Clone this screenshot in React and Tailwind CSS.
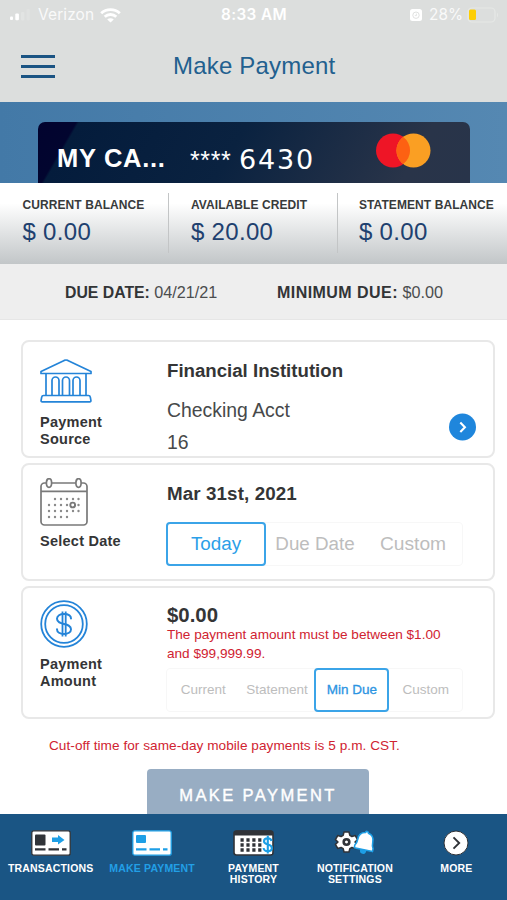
import React from "react";

function StatusBar() {
  return (
    <div className="flex h-[30px] items-center text-white">
      <div className="flex w-[221px] items-center pl-[10px]">
        <svg width="24" height="12" viewBox="0 0 24 12" fill="#fff">
          <rect x="0" y="7.5" width="3" height="3.6" rx="1" />
          <rect x="5.3" y="4.6" width="3.6" height="6.600" rx="1" />
          <rect x="11" y="3" width="3.4" height="8.6" rx="1" opacity=".18" />
          <rect x="16.5" y="0" width="3.4" height="11.6" rx="1" opacity=".12" />
        </svg>
        <span className="ml-[4px] w-[60px] font-['Inter',sans-serif] text-[15.5px] leading-[20px] tracking-[0.1px] whitespace-nowrap opacity-85">Verizon</span>
        <svg className="ml-[2px]" width="21" height="15" viewBox="0 0 21 15" fill="none" stroke="#fff" strokeWidth="2.9">
          <path d="M1.2 5.2C6.4.4 14.6.4 19.8 5.2" />
          <path d="M4.7 8.8c3.3-3 8.3-3 11.6 0" />
          <path d="M10.5 14.6 7.2 11.4c1.8-1.7 4.8-1.7 6.600 0z" fill="#fff" stroke="none" />
        </svg>
      </div>
      <span className="w-[189px] font-['Inter',sans-serif] text-[15.3px] font-semibold leading-[20px] tracking-[0.4px] whitespace-nowrap">8:33 AM</span>
      <svg width="12" height="12" viewBox="0 0 12 12">
        <rect width="12" height="12" rx="2.5" fill="#fff" />
        <circle cx="6" cy="6.2" r="3.2" fill="none" stroke="#dcdedd" strokeWidth=".9" />
        <path d="M6.4 4.600v2H4.800" fill="none" stroke="#dcdedd" strokeWidth=".8" />
      </svg>
      <span className="ml-[7px] w-[36px] font-['Inter',sans-serif] text-[15.3px] leading-[20px] tracking-[0.1px] whitespace-nowrap opacity-85">28%</span>
      <svg className="ml-[2px]" width="32" height="16" viewBox="0 0 32 16">
        <rect x="1" y="1" width="27" height="14" rx="4" fill="none" stroke="#e6e8e6" strokeWidth="1.2" />
        <rect x="2" y="2.500" width="7" height="10.500" rx="1.5" fill="#fdce04" />
        <path d="M30 5.5q2 2.5 0 5z" fill="#e6e8e6" />
      </svg>
    </div>
  );
}

function Header() {
  return (
    <header className="h-[102px] bg-[#dcdedd]">
      <StatusBar />
      <div className="flex h-[72px] items-center pl-[21px]">
        <div className="flex w-[34px] flex-col gap-[7px] pt-[1px]">
          <span className="h-[3px] bg-[#1b5483]" />
          <span className="h-[3px] bg-[#1b5483]" />
          <span className="h-[3px] bg-[#1b5483]" />
        </div>
        <h1 className="ml-[118px] text-[24px] leading-[30px] tracking-[0.2px] text-[#22608f]">Make Payment</h1>
      </div>
    </header>
  );
}

function CardBanner() {
  return (
    <div className="h-[81px] bg-linear-to-r from-[#4379a7] to-[#5588b2] px-[38px] pt-[20px]">
      <div className="flex h-[61px] w-[432px] items-start overflow-hidden rounded-t-[7px] bg-[linear-gradient(120deg,#02032f_0%,#02052f_8.2%,#041c3c_8.8%,#0a2240_45%,#293449_85%,#28344a_100%)] text-white">
        <span className="mt-[20px] ml-[19px] w-[133px] text-[25.5px] font-bold leading-[32px] tracking-[0.7px] whitespace-nowrap">MY CA...</span>
        <span className="mt-[22px] w-[49px] text-[25px] leading-[32px] tracking-[0.6px]">****</span>
        <span className="mt-[22px] w-[137px] font-['DejaVu_Sans',sans-serif] text-[27px] leading-[32px] tracking-[1.8px]">6430</span>
        <svg className="mt-[11px]" width="56" height="36" viewBox="0 0 56 36">
          <circle cx="17" cy="17.5" r="17" fill="#ee1526" />
          <circle cx="37.500" cy="17.5" r="17" fill="#fa9f23" />
          <path d="M27.250 3.900a17 17 0 0 1 0 27.200a17 17 0 0 1 0-27.200z" fill="#fd6112" />
        </svg>
      </div>
    </div>
  );
}

function Stat({ label, value }) {
  return (
    <div className="pt-[12px]">
      <div className="text-[12px] font-bold leading-[21px] tracking-[0.08px] whitespace-nowrap text-[#383a3b]">{label}</div>
      <div className="pt-px text-[24px] leading-[30px] tracking-[0.3px] whitespace-nowrap text-[#20406f]">{value}</div>
    </div>
  );
}

function Balances() {
  return (
    <div className="flex h-[81px] bg-linear-to-b from-white from-25% to-[#c2c6c8]">
      <div className="w-[168px] pl-[22.5px]"><Stat label="CURRENT BALANCE" value="$ 0.00" /></div>
      <div className="mt-[10px] h-[60px] w-px bg-[#c3c5c6]" />
      <div className="w-[168px] pl-[22px]"><Stat label="AVAILABLE CREDIT" value="$ 20.00" /></div>
      <div className="mt-[10px] h-[60px] w-px bg-[#c3c5c6]" />
      <div className="pl-[21px]"><Stat label="STATEMENT BALANCE" value="$ 0.00" /></div>
    </div>
  );
}

function DueBar() {
  return (
    <div className="flex h-[56px] items-center border-b border-[#e6e6e6] bg-[#eeeeee] pt-px pl-[65px] text-[16.2px] leading-[20px] whitespace-nowrap text-[#4b4d4e]">
      <div className="w-[212px]"><b className="text-[15.8px] text-[#323436]">DUE DATE:</b> 04/21/21</div>
      <div><b className="text-[16px] tracking-[0.45px] text-[#323436]">MINIMUM DUE:</b> $0.00</div>
    </div>
  );
}

function BankIcon() {
  return (
    <svg width="52" height="44" viewBox="0 0 52 44" fill="none" stroke="#2484d8" strokeWidth="1.7" strokeLinejoin="round">
      <path d="M1 12.5 24.2 1.4q1.8-.8 3.6 0L51 12.5v2H1z" />
      <path d="M6 14.5V36M46 14.5V36M3.5 36.5h45q1.5 0 1.8 1.6l.6 3.2q.2 1.5-1.2 1.5H2.3q-1.4 0-1.2-1.5l.6-3.2q.3-1.6 1.8-1.6z" />
      <path d="M12 36.5V21.500a3.500 3.500 0 0 1 7 0v15M22.500 36.500v-15a3.500 3.500 0 0 1 7 0v15M33 36.500v-15a3.500 3.500 0 0 1 7 0v15" />
    </svg>
  );
}

const calendarRows = [
  { y: 21, xs: [15, 21, 27, 33, 38.5] },
  { y: 27, xs: [9, 15, 21, 27, 38.5] },
  { y: 33, xs: [9, 15, 21, 27, 33, 38.5] },
  { y: 39, xs: [9, 15, 21, 27] },
];

function CalendarIcon() {
  return (
    <svg width="48" height="48" viewBox="0 0 48 48" fill="none" stroke="#797979" strokeWidth="1.7">
      <rect x="1" y="5" width="46" height="42" rx="3.5" />
      <path d="M1 13.300h46" />
      <ellipse cx="9" cy="5" rx="2.600" ry="4.300" fill="#fff" />
      <ellipse cx="38.500" cy="5" rx="2.600" ry="4.300" fill="#fff" />
      <circle cx="32.700" cy="27" r="2.400" strokeWidth="1.900" />
      {calendarRows.map((row) => row.xs.map((x) => (
        <circle key={`${x}-${row.y}`} cx={x} cy={row.y} r="1.200" fill="#8a8a8a" stroke="none" />
      )))}
    </svg>
  );
}

function DollarIcon() {
  return (
    <svg width="48" height="48" viewBox="0 0 48 48" fill="none" stroke="#2484d8" strokeWidth="1.800">
      <circle cx="24" cy="24" r="22.800" />
      <circle cx="24" cy="24" r="18.800" />
      <path d="M31 18.600c0-3-3-4.600-7-4.600s-7 1.800-7 4.800c0 7 14 3.400 14 10.400 0 3-3 4.800-7 4.800s-7-1.800-7-4.800" strokeWidth="2" strokeLinecap="round" />
      <path d="M22.500 11.500v25M25.700 11.500v25" />
    </svg>
  );
}

function Panel({ height, icon, label, children }) {
  return (
    <section className={`${height} flex overflow-hidden rounded-[8px] border-2 border-[#e8e8e8] bg-white pl-[16px]`}>
      <div className="w-[128px] shrink-0 pl-px">
        {icon}
        <div className="text-[14.5px] font-bold leading-[17.5px] tracking-[0.25px] whitespace-pre-line text-[#343536]">{label}</div>
      </div>
      {children}
    </section>
  );
}

function SourcePanel() {
  return (
    <Panel height="h-[118px]" label={"Payment\nSource"} icon={<div className="h-[71.500px] pt-[17px]"><BankIcon /></div>}>
      <div className="w-[282px] pt-[16px] text-[#47494a]">
        <div className="text-[18.65px] font-bold leading-[25px] text-[#343536]">Financial Institution</div>
        <div className="mt-[11px] text-[19.4px] leading-[32px]">Checking Acct<br />16</div>
      </div>
      <svg className="mt-[71px]" width="27" height="28" viewBox="0 0 27 28">
        <circle cx="13.500" cy="14" r="13.500" fill="#1f86dc" />
        <path d="m11.300 9.500 4.600 4.700-4.600 4.700" fill="none" stroke="#fff" strokeWidth="2.100" />
      </svg>
    </Panel>
  );
}

function DatePanel() {
  return (
    <Panel height="h-[118px]" label="Select Date" icon={<div className="h-[67.500px] pt-[13px]"><CalendarIcon /></div>}>
      <div className="pt-[16px]">
        <div className="text-[18.800px] font-bold leading-[25px] tracking-[0.1px] text-[#343536]">Mar 31st, 2021</div>
        <div className="mt-[16px] -ml-px flex h-[44px] w-[297px] items-center rounded-[4px] border border-[#f7f7f7] text-[18.8px] text-[#bdbdbd]">
          <div className="-ml-px flex h-[44px] w-[100px] shrink-0 items-center justify-center rounded-[4px] border-2 border-[#3ba4e8] pt-px text-[#2b9fe8]">Today</div>
          <div className="w-[98px] pt-px text-center whitespace-nowrap">Due Date</div>
          <div className="w-[98px] pt-px text-center text-[19.2px]">Custom</div>
        </div>
      </div>
    </Panel>
  );
}

function AmountPanel() {
  return (
    <Panel height="h-[133px]" label={"Payment\nAmount"} icon={<div className="h-[67.500px] pt-[12px]"><DollarIcon /></div>}>
      <div className="pt-[15px]">
        <div className="text-[20.4px] font-bold leading-[25px] text-[#343536]">$0.00</div>
        <p className="-mt-[3px] w-[285px] text-[13.6px] leading-[19px] text-[#d02331]">The payment amount must be between $1.00 and $99,999.99.</p>
        <div className="mt-[5px] -ml-px flex h-[44px] w-[297px] items-center rounded-[4px] border border-[#f7f7f7] text-[13.5px] text-[#bdbdbd]">
          <div className="w-[73px] text-center">Current</div>
          <div className="w-[75px] text-center">Statement</div>
          <div className="flex h-[44px] w-[75px] shrink-0 items-center justify-center rounded-[4px] border-2 border-[#3ba4e8] text-[#2b94e2] [-webkit-text-stroke:0.3px_#2b94e2]">Min Due</div>
          <div className="w-[73px] text-center">Custom</div>
        </div>
      </div>
    </Panel>
  );
}

function CardIcon({ active }) {
  const ink = active ? "#1e9fe6" : "#303338";
  return (
    <svg width="40" height="26" viewBox="0 0 40 26">
      <rect x=".8" y=".8" width="38.400" height="24.400" rx="2" fill="#fff" stroke={ink} strokeWidth="1.300" />
      <rect x="4" y={active ? 5 : 4.500} width={active ? 10 : 10.500} height={active ? 8 : 11} rx="1" fill={ink} />
      {!active && <path d="M21 7.500h6V5l6.500 5-6.500 4.500V12h-6z" fill="#1e9fe6" />}
      <path d="M4 19.300h10.500M17.500 19.300H28M31 19.300h4.500" stroke={ink} strokeWidth="2.200" />
    </svg>
  );
}

function HistoryIcon() {
  return (
    <svg width="42" height="26" viewBox="0 0 42 26">
      <rect x="1" y="1" width="39" height="24" rx="2.500" fill="#fff" stroke="#303338" strokeWidth="1.600" />
      <path d="M1 5.500V3q0-2.500 2.500-2.500h34Q40 .5 40 3v2.500z" fill="#303338" />
      {[10, 15, 20].map((y) => (
        <path key={y} d={`M7.500 ${y}h21.500`} stroke="#303338" strokeWidth="3.300" strokeDasharray="3.200 2.700" />
      ))}
      <path d="M30 6h9v18h-9z" fill="#fff" />
      <path d="M38.500 11c-.3-2-1.700-2.800-3.700-2.800-2.300 0-3.800 1.100-3.800 3 0 4.500 7.900 2.300 7.900 6.800 0 2-1.700 3.200-4.100 3.200s-4-1.200-4.200-3.200M34.800 5.800v17.700" fill="none" stroke="#1e9fe6" strokeWidth="2.100" />
    </svg>
  );
}

function SettingsIcon() {
  return (
    <svg width="42" height="28" viewBox="0 0 42 28">
      <g transform="translate(12.500 13)">
        <path d="M-2.500-10h5l.8 3.300 2.100 1.200 3.300-1 2.400 4.100L8.500 0l2.600 2.400-2.400 4.100-3.300-1-2.100 1.200L2.500 10h-5l-.8-3.300-2.100-1.200-3.300 1-2.400-4.100L-8.500 0l-2.600-2.400 2.400-4.100 3.300 1 2.100-1.200z" fill="#fff" stroke="#303338" strokeWidth="1.500" strokeLinejoin="round" />
        <circle r="2.800" fill="#fff" stroke="#303338" strokeWidth="2.600" />
      </g>
      <g transform="translate(31 13) rotate(12) scale(.98)" fill="#fff" stroke="#1e9fe6" strokeWidth="1.600" strokeLinejoin="round">
        <path d="M-2.500 8.500h5Q2.500 11.500 0 11.500T-2.500 8.500z" fill="#1e9fe6" />
        <path d="M-1.500-9.500q0-1.500 1.500-1.500t1.500 1.500C6-8.700 7.800-5.500 7.800-1.500c0 3.500.2 4.500 1.700 6.500v3h-19V5C-8 3-7.800 2-7.800-1.500c0-4 1.800-7.200 6.300-8z" />
      </g>
    </svg>
  );
}

function MoreIcon() {
  return (
    <svg width="26" height="26" viewBox="0 0 26 26">
      <circle cx="13" cy="13" r="12" fill="#fff" stroke="#303338" strokeWidth="1" />
      <path d="m10.500 7.300 5.700 5.700-5.700 5.700" fill="none" stroke="#303338" strokeWidth="1.900" />
    </svg>
  );
}

function NavItem({ icon, label, active }) {
  return (
    <div className={`flex flex-1 basis-0 flex-col items-center ${active ? "text-[#229fe6]" : "text-white"}`}>
      <div className="flex h-[29px] items-center">{icon}</div>
      <div className="mt-[5.500px] text-center text-[10.5px] font-bold leading-[11px] tracking-[0.18px] whitespace-pre">{label}</div>
    </div>
  );
}

function BottomNav() {
  return (
    <nav className="flex h-[86px] bg-[#1a5584] pt-[14px]">
      <NavItem icon={<CardIcon />} label="TRANSACTIONS" />
      <NavItem icon={<CardIcon active />} label="MAKE PAYMENT" active />
      <NavItem icon={<HistoryIcon />} label={"PAYMENT\nHISTORY"} />
      <NavItem icon={<SettingsIcon />} label={"NOTIFICATION\nSETTINGS"} />
      <NavItem icon={<MoreIcon />} label="MORE" />
    </nav>
  );
}

export default function App() {
  return (
    <div className="flex h-[900px] w-[507px] flex-col overflow-hidden bg-white font-['Liberation_Sans',Arial,sans-serif]">
      <Header />
      <CardBanner />
      <Balances />
      <DueBar />
      <main className="flex h-[494px] flex-col overflow-hidden pt-[20px] pr-[12px] pl-[21px]">
        <div className="flex flex-col gap-[5px]">
          <SourcePanel />
          <DatePanel />
          <AmountPanel />
        </div>
        <p className="mt-[17px] ml-[28px] text-[13.6px] leading-[20px] tracking-[0.05px] whitespace-nowrap text-[#d02331]">Cut-off time for same-day mobile payments is 5 p.m. CST.</p>
        <button className="mt-[13px] ml-[126px] h-[53px] w-[222px] shrink-0 rounded-[4px] bg-[#98adc3] text-[16.5px] leading-[53px] tracking-[2.4px] text-white [-webkit-text-stroke:0.4px_white]">MAKE PAYMENT</button>
      </main>
      <BottomNav />
    </div>
  );
}
